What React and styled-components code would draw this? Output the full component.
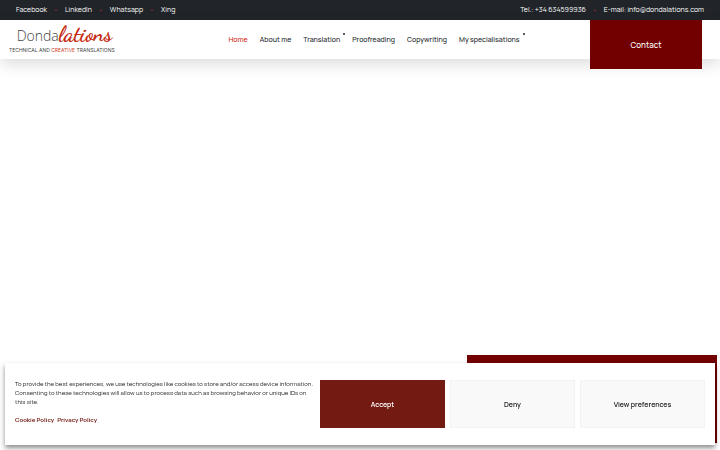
import React, { useState } from 'react';
import styled, { createGlobalStyle } from 'styled-components';

const GlobalStyle = createGlobalStyle`
    * {
        box-sizing: border-box;
    }
    body {
        margin: 0;
        background: #fff;
        color: #212529;
        font-family: Manrope, Inter, 'Liberation Sans', sans-serif;
        font-size: 7px;
    }
    a {
        color: inherit;
        text-decoration: none;
    }
    button {
        border: 0;
        padding: 0;
        font-family: inherit;
        cursor: pointer;
    }
`

const Page = styled.div`
    min-height: 100vh;
    display: flex;
    flex-direction: column;
`

const TopBar = styled.div`
    height: 20px;
    padding: 0 16px;
    display: flex;
    align-items: center;
    justify-content: space-between;
    background: #212529;
    color: #fff;
`

const LinkList = styled.ul`
    margin: 0;
    padding: 0;
    list-style: none;
    display: flex;
    align-items: center;
    line-height: 10px;

    li + li::before {
        content: '';
        display: inline-block;
        width: 2px;
        height: 1px;
        margin: 0 8px;
        vertical-align: middle;
        background: #8c2a22;
    }
`

const Header = styled.header`
    height: 39px;
    padding-right: 18px;
    display: flex;
    align-items: center;
    background: #fff;
    box-shadow: 0 5px 16px rgba(0, 0, 0, 0.14);
`

const LogoArea = styled.div`
    width: 158px;
    padding: 0 0 2px 9px;
    display: flex;
`

const Logo = styled.a`
    display: flex;
    flex-direction: column;
    align-items: center;
    color: #444;
    white-space: nowrap;
`

const LogoName = styled.span`
    padding-left: 5px;
    display: flex;
    align-items: baseline;
    font-family: 'Open Sans', sans-serif;
    font-size: 14px;
    font-weight: 300;
    line-height: 20px;
`

const LogoScript = styled.span`
    color: #c62a11;
    font-family: 'Dancing Script', 'Liberation Serif', cursive;
    font-size: 22px;
    font-weight: 700;
`

const LogoTagline = styled.span`
    font-family: Inter, sans-serif;
    font-size: 5px;
    line-height: 8px;

    em {
        color: #d0401f;
        font-style: normal;
    }
`

const Nav = styled.nav`
    flex: 1;
    display: flex;
    justify-content: center;
    gap: 12px;
    font-weight: 500;
    line-height: 10px;
    white-space: nowrap;
`

const NavLink = styled.a`
    display: flex;
    color: ${({ $active }) => ($active ? '#d0250f' : '#212529')};

    ${({ $submenu }) => $submenu && `
        margin-right: -5px;

        &::after {
            content: '';
            width: 2px;
            height: 2px;
            margin: -2px 0 0 3px;
            border-radius: 1px;
            background: #212529;
        }
    `}
`

const ContactLink = styled.a`
    width: 112px;
    height: 49px;
    align-self: flex-start;
    display: flex;
    align-items: center;
    justify-content: center;
    background: #720000;
    color: #fff;
    font-size: 8px;
    font-weight: 500;
`

const Hero = styled.main`
    flex: 1;
    padding: 0 3px 7px;
    display: flex;
    align-items: flex-end;
    justify-content: flex-end;
`

const HeroPanel = styled.div`
    width: 35%;
    height: 88px;
    background: #720000;
`

const CookieBanner = styled.section`
    position: fixed;
    left: 5px;
    right: 5px;
    bottom: 5px;
    padding: 17px 10px;
    display: flex;
    gap: 5px;
    background: #fff;
    box-shadow: 0 3px 5px rgba(0, 0, 0, 0.45);
`

const CookieText = styled.div`
    flex: 1;
    font-size: 6px;
    line-height: 9px;
    color: #222;

    p {
        margin: 0 0 9px;
    }
`

const PolicyLinks = styled.div`
    display: flex;
    gap: 3px;
    color: #731b12;
    font-weight: 700;
`

const CookieButton = styled.button`
    width: 125px;
    height: 48px;
    border: 1px solid ${({ $primary }) => ($primary ? '#731b12' : '#f3f3f3')};
    background: ${({ $primary }) => ($primary ? '#731b12' : '#f9f9f9')};
    color: ${({ $primary }) => ($primary ? '#fff' : '#222')};
    font-size: 7px;
    font-weight: 600;
`

const socialLinks = ['Facebook', 'LinkedIn', 'Whatsapp', 'Xing'];

const navItems = [
    { label: 'Home', active: true },
    { label: 'About me' },
    { label: 'Translation', submenu: true },
    { label: 'Proofreading' },
    { label: 'Copywriting' },
    { label: 'My specialisations', submenu: true },
];

const App = () => {
    const [showCookies, setShowCookies] = useState(true);

    return (
        <>
            <GlobalStyle />
            <Page>
                <TopBar>
                    <LinkList>
                        {socialLinks.map((item) => (
                            <li key={item}><a href="#social">{item}</a></li>
                        ))}
                    </LinkList>
                    <LinkList>
                        <li><a href="tel:+34634599936">Tel.: +34 634599936</a></li>
                        <li><a href="mailto:info@dondalations.com">E-mail: info@dondalations.com</a></li>
                    </LinkList>
                </TopBar>
                <Header>
                    <LogoArea>
                        <Logo href="#home">
                            <LogoName>Donda<LogoScript>lations</LogoScript></LogoName>
                            <LogoTagline>TECHNICAL AND <em>CREATIVE</em> TRANSLATIONS</LogoTagline>
                        </Logo>
                    </LogoArea>
                    <Nav>
                        {navItems.map((item) => (
                            <NavLink key={item.label} href="#page" $active={item.active} $submenu={item.submenu}>
                                {item.label}
                            </NavLink>
                        ))}
                    </Nav>
                    <ContactLink href="#contact">Contact</ContactLink>
                </Header>
                <Hero>
                    <HeroPanel />
                </Hero>
            </Page>
            {
                showCookies &&
                <CookieBanner>
                    <CookieText>
                        <p>
                            To provide the best experiences, we use technologies like cookies to store and/or access
                            device information. Consenting to these technologies will allow us to process data such as
                            browsing behavior or unique IDs on this site.
                        </p>
                        <PolicyLinks>
                            <a href="#cookies">Cookie Policy</a>
                            <a href="#privacy">Privacy Policy</a>
                        </PolicyLinks>
                    </CookieText>
                    <CookieButton $primary onClick={() => setShowCookies(false)}>Accept</CookieButton>
                    <CookieButton onClick={() => setShowCookies(false)}>Deny</CookieButton>
                    <CookieButton>View preferences</CookieButton>
                </CookieBanner>
            }
        </>
    )
}

export default App;
